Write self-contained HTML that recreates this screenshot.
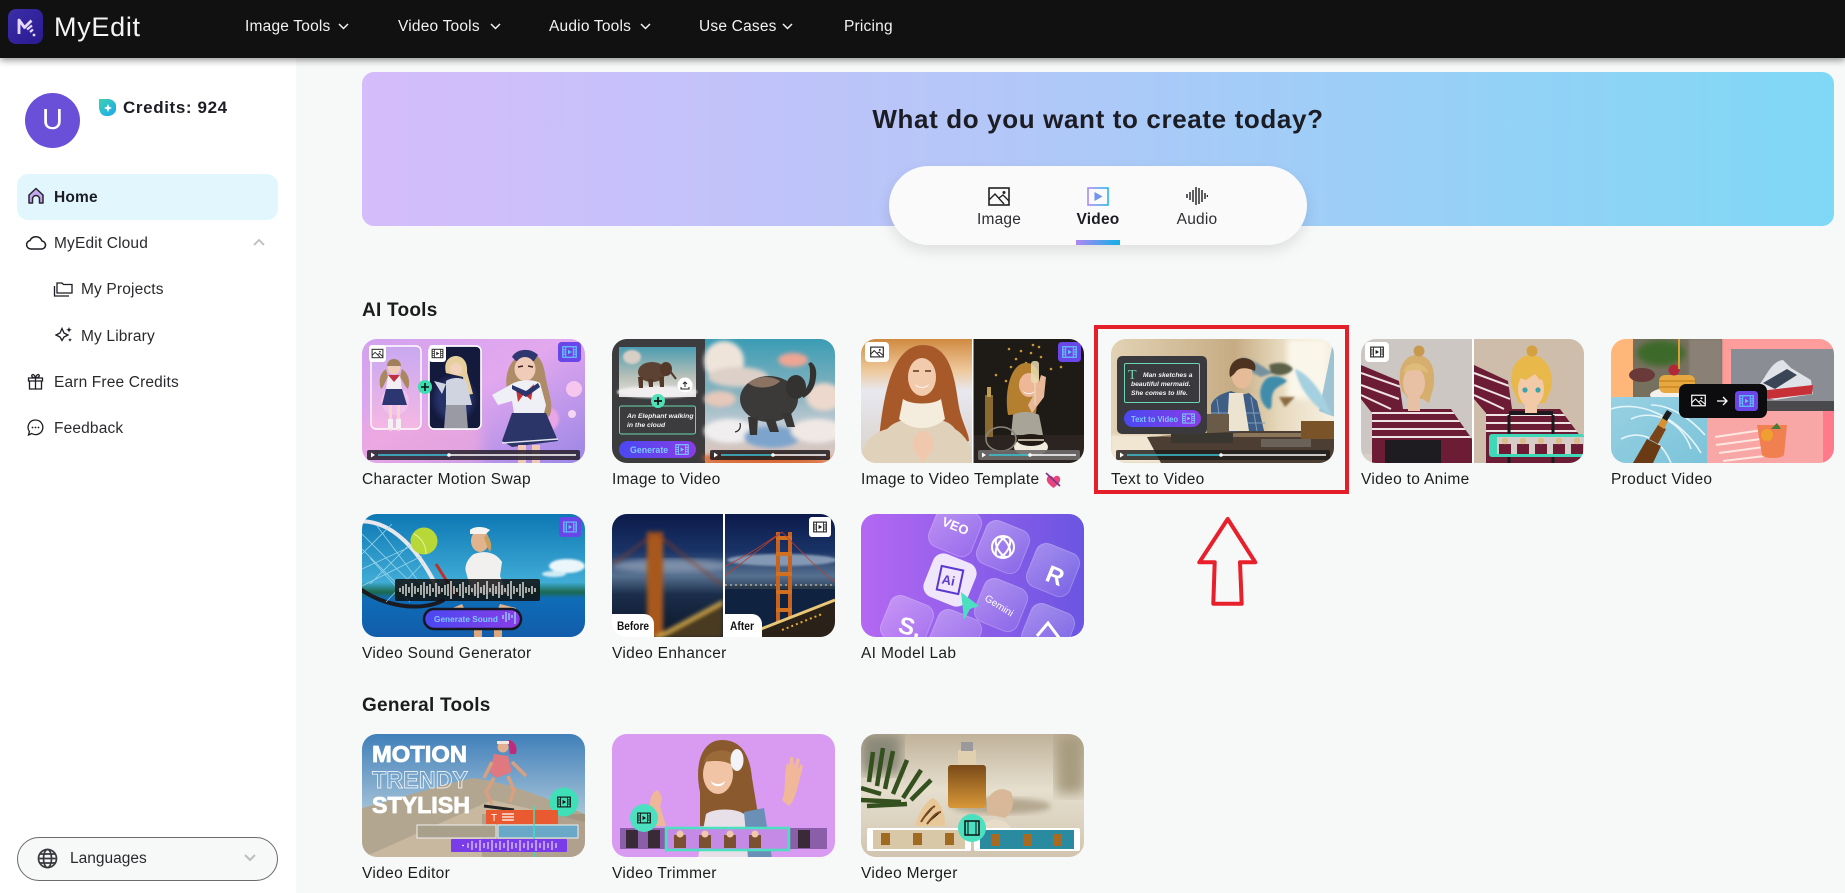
<!DOCTYPE html>
<html lang="en"><head><meta charset="utf-8"><title>MyEdit</title>
<style>
*{box-sizing:border-box;margin:0;padding:0}
html,body{width:1845px;height:893px;overflow:hidden;background:#f7f9f9;font-family:"Liberation Sans",sans-serif;color:#1c1c1c}
.a{position:absolute}
.side{left:0;top:58px;width:296px;height:835px;background:#fff}
.hd{left:0;top:0;width:1845px;height:58px;background:#111;box-shadow:0 2px 7px rgba(0,0,0,.45);z-index:5}
.nav{top:18px;color:#f2f2f2;font-size:15.5px;line-height:18px;white-space:nowrap;letter-spacing:.2px}
.it{font-size:15.5px;line-height:20px;letter-spacing:.15px;color:#2a2a2e;white-space:nowrap}
.lb{font-size:15.5px;line-height:20px;letter-spacing:.33px;color:#1c1c1c;white-space:nowrap}
.h2{font-size:19px;font-weight:bold;line-height:22px;color:#1c1c1c;letter-spacing:.25px}
.t{width:223px;height:124px;border-radius:15px;overflow:hidden}
.t svg{display:block;filter:blur(.35px)}
</style></head><body>
<svg width="0" height="0" style="position:absolute"><defs>
<filter id="b1"><feGaussianBlur stdDeviation="1"/></filter>
<filter id="b2"><feGaussianBlur stdDeviation="2"/></filter>
<filter id="b3"><feGaussianBlur stdDeviation="3"/></filter>
<filter id="b6"><feGaussianBlur stdDeviation="6"/></filter>
<symbol id="film" viewBox="0 0 20 16"><rect x="1" y="1" width="18" height="14" fill="none" stroke="currentColor" stroke-width="1.600"/><path d="M5 1v14M15 1v14M1 5h4M1 8h4M1 11h4M15 5h4M15 8h4M15 11h4" stroke="currentColor" stroke-width="1.200" fill="none"/><path d="M8 5l5 3-5 3z" fill="currentColor"/></symbol>
<symbol id="pic" viewBox="0 0 20 16"><rect x="1" y="1" width="18" height="14" fill="none" stroke="currentColor" stroke-width="1.600"/><path d="M1 11l5-5 8 8M10 10l3-2 6 5" fill="none" stroke="currentColor" stroke-width="1.400"/><circle cx="14" cy="5" r="1.400" fill="currentColor"/></symbol>
<linearGradient id="btn" x1="0" x2="1"><stop offset="0" stop-color="#4a48f2"/><stop offset="1" stop-color="#8a3ce6"/></linearGradient>
</defs></svg>

<div class="a side"></div>
<div class="a hd">
  <svg class="a" style="left:8px;top:9px" width="35" height="35" viewBox="0 0 35 35"><defs><linearGradient id="lg" x1="0" y1="0" x2="1" y2="1"><stop offset="0" stop-color="#3b2ea8"/><stop offset="1" stop-color="#2a1a90"/></linearGradient></defs><rect width="35" height="35" rx="8" fill="url(#lg)"/><path d="M11 25V11l5.500 7.500 7-7" fill="none" stroke="#e6d8ff" stroke-width="2.800" stroke-linejoin="round"/><path d="M19 20.500l5-4M22 23l3-2.500" stroke="#e6d8ff" stroke-width="2.200"/><circle cx="26" cy="26" r="1.400" fill="#e6d8ff"/></svg>
  <div class="a" style="left:54px;top:11px;font-size:27px;line-height:32px;color:#f4f4f4;letter-spacing:.7px;white-space:nowrap">MyEdit</div>
  <div class="a nav" style="left:245px">Image Tools</div>
  <div class="a nav" style="left:398px">Video Tools</div>
  <div class="a nav" style="left:549px">Audio Tools</div>
  <div class="a nav" style="left:699px">Use Cases</div>
  <div class="a nav" style="left:844px">Pricing</div>
  <svg class="a" style="left:337px;top:22px" width="13" height="9" viewBox="0 0 13 9"><path d="M2 2l4.500 4.500L11 2" fill="none" stroke="#f2f2f2" stroke-width="1.500"/></svg>
  <svg class="a" style="left:489px;top:22px" width="13" height="9" viewBox="0 0 13 9"><path d="M2 2l4.500 4.500L11 2" fill="none" stroke="#f2f2f2" stroke-width="1.500"/></svg>
  <svg class="a" style="left:639px;top:22px" width="13" height="9" viewBox="0 0 13 9"><path d="M2 2l4.500 4.500L11 2" fill="none" stroke="#f2f2f2" stroke-width="1.500"/></svg>
  <svg class="a" style="left:781px;top:22px" width="13" height="9" viewBox="0 0 13 9"><path d="M2 2l4.500 4.500L11 2" fill="none" stroke="#f2f2f2" stroke-width="1.500"/></svg>
</div>

<!-- sidebar -->
<div class="a" style="left:25px;top:93px;width:55px;height:55px;border-radius:50%;background:#6a4fd8;color:#fff;font-size:29px;line-height:55px;text-align:center">U</div>
<svg class="a" style="left:98px;top:99px" width="18" height="18" viewBox="0 0 18 18"><defs><linearGradient id="sh" x1="0" y1="0" x2="1" y2="1"><stop offset="0" stop-color="#3fd0b0"/><stop offset="1" stop-color="#1aa8f0"/></linearGradient></defs><path d="M1 0h9a7.500 7.500 0 0 1 0 17H8C3 17 1 12 1 8z" fill="url(#sh)"/><path d="M10 5l1.200 2.800L14 9l-2.800 1.200L10 13l-1.200-2.800L6 9l2.800-1.200z" fill="#fff"/></svg>
<div class="a" style="left:123px;top:97px;font-size:17px;font-weight:bold;line-height:22px;letter-spacing:.62px;color:#1c1c24;white-space:nowrap">Credits: 924</div>

<div class="a" style="left:17px;top:174px;width:261px;height:46px;border-radius:11px;background:#e2f6fd"></div>
<svg class="a" style="left:27px;top:187px" width="18" height="18" viewBox="0 0 18 18"><path d="M2 16V8l7-6.500L16 8v8h-3.500v-4a3.500 3.500 0 0 0-7 0v4z" fill="#c3a8f2" stroke="#26262c" stroke-width="1.500" stroke-linejoin="round"/></svg>
<div class="a it" style="left:54px;top:188px;font-weight:bold;color:#1c1c24;letter-spacing:.2px">Home</div>
<svg class="a" style="left:25px;top:233px" width="22" height="18" viewBox="0 0 22 18"><path d="M6 16h10a4 4 0 0 0 1-8A6.500 6.500 0 0 0 5 7.500 4.300 4.300 0 0 0 6 16z" fill="none" stroke="#1c1c24" stroke-width="1.500"/></svg>
<div class="a it" style="left:54px;top:234px">MyEdit Cloud</div>
<svg class="a" style="left:252px;top:238px" width="14" height="9" viewBox="0 0 14 9"><path d="M2 7l5-5 5 5" fill="none" stroke="#bdbdbd" stroke-width="1.800"/></svg>
<svg class="a" style="left:53px;top:280px" width="20" height="17" viewBox="0 0 20 17"><path d="M4 3h5l1.500 1.500H19V13H4z" fill="none" stroke="#1c1c24" stroke-width="1.300"/><path d="M1.500 6v10H16" fill="none" stroke="#1c1c24" stroke-width="1.300"/></svg>
<div class="a it" style="left:81px;top:280px">My Projects</div>
<svg class="a" style="left:55px;top:326px" width="18" height="18" viewBox="0 0 18 18"><path d="M7 5l2 4.500L13 11.500 9 13.500 7 17 5 13.500 1 11.500 5 9.500z" fill="none" stroke="#1c1c24" stroke-width="1.300" transform="translate(0,-2.500)"/><path d="M14 1l.8 2 2 .8-2 .8-.8 2-.8-2-2-.8 2-.8zM15 12l.6 1.300 1.300.6-1.300.6-.6 1.300-.6-1.300-1.300-.6 1.300-.6z" fill="#1c1c24"/></svg>
<div class="a it" style="left:81px;top:327px">My Library</div>
<svg class="a" style="left:27px;top:373px" width="17" height="17" viewBox="0 0 17 17"><path d="M1.500 5h14v3h-14zM2.500 8v8h12V8M8.500 5v11M8.500 5C6 5 4 3.500 5 2s3 .5 3.500 3C9 2.500 11 .5 12 2s-1 3-3.500 3z" fill="none" stroke="#1c1c24" stroke-width="1.300"/></svg>
<div class="a it" style="left:54px;top:373px">Earn Free Credits</div>
<svg class="a" style="left:27px;top:419px" width="17" height="17" viewBox="0 0 17 17"><path d="M8.500 1a7.300 7.300 0 1 1-3.800 13.500L1.500 16l.9-3.500A7.300 7.300 0 0 1 8.500 1z" fill="none" stroke="#1c1c24" stroke-width="1.300"/><circle cx="5.500" cy="8.500" r=".9" fill="#1c1c24"/><circle cx="8.500" cy="8.500" r=".9" fill="#1c1c24"/><circle cx="11.500" cy="8.500" r=".9" fill="#1c1c24"/></svg>
<div class="a it" style="left:54px;top:419px">Feedback</div>

<div class="a" style="left:17px;top:837px;width:261px;height:44px;border-radius:22px;border:1px solid #6a6a6a;background:#f7f9f9"></div>
<svg class="a" style="left:37px;top:848px" width="21" height="21" viewBox="0 0 21 21"><g fill="none" stroke="#3a3a3e" stroke-width="1.700"><circle cx="10.500" cy="10.500" r="9"/><ellipse cx="10.500" cy="10.500" rx="4" ry="9"/><path d="M1.500 10.500h18M2.800 6h15.400M2.800 15h15.400"/></g></svg>
<div class="a it" style="left:70px;top:849px;letter-spacing:0">Languages</div>
<svg class="a" style="left:243px;top:853px" width="14" height="10" viewBox="0 0 14 10"><path d="M2 2l5 5 5-5" fill="none" stroke="#bdbdbd" stroke-width="2"/></svg>

<!-- banner -->
<div class="a" style="left:362px;top:72px;width:1472px;height:154px;border-radius:12px;background:linear-gradient(90deg,#d5bcfb 0%,#b6c6f8 40%,#7fd8f6 100%)"></div>
<div class="a" style="left:362px;top:104px;width:1472px;text-align:center;font-size:26px;line-height:30px;font-weight:bold;color:#1c1c24;letter-spacing:.63px">What do you want to create today?</div>
<div class="a" style="left:889px;top:166px;width:418px;height:79px;border-radius:40px;background:#fafafa;box-shadow:0 6px 14px rgba(0,0,0,.1)"></div>
<svg class="a" style="left:988px;top:187px" width="22" height="19" viewBox="0 0 22 19"><rect x="1" y="1" width="20" height="17" fill="none" stroke="#222" stroke-width="1.600"/><path d="M1 13l6-6 9 10M11 11l4-3 6 6" fill="none" stroke="#222" stroke-width="1.400"/><circle cx="16" cy="5.500" r="1.500" fill="#222"/></svg>
<svg class="a" style="left:1087px;top:187px" width="22" height="19" viewBox="0 0 22 19"><defs><linearGradient id="vg" x1="0" x2="1"><stop offset="0" stop-color="#a98af0"/><stop offset="1" stop-color="#26b4e8"/></linearGradient></defs><rect x="1" y="1" width="20" height="17" fill="none" stroke="url(#vg)" stroke-width="1.600"/><path d="M7.500 5l8 4.500-8 4.500z" fill="#6f93ee"/></svg>
<svg class="a" style="left:1186px;top:186px" width="22" height="20" viewBox="0 0 22 20"><path d="M1 8v4M4 6v8M7 4v12M10 1v18M13 2v16M16 4v12M19 7v6M21.500 9v2" stroke="#2a2a2e" stroke-width="1.500" fill="none"/></svg>
<div class="a" style="left:949px;top:210px;width:100px;text-align:center;font-size:15.5px;line-height:20px;letter-spacing:.2px;color:#2e2e32">Image</div>
<div class="a" style="left:1048px;top:210px;width:100px;text-align:center;font-size:15.5px;line-height:20px;font-weight:bold;letter-spacing:.2px;color:#1c1c24">Video</div>
<div class="a" style="left:1147px;top:210px;width:100px;text-align:center;font-size:15.5px;line-height:20px;letter-spacing:.2px;color:#2e2e32">Audio</div>
<div class="a" style="left:1076px;top:240px;width:44px;height:5px;background:linear-gradient(90deg,#b087f0,#10b0e8)"></div>

<div class="a h2" style="left:362px;top:300px">AI Tools</div>
<div class="a h2" style="left:362px;top:695px">General Tools</div>

<!-- 1 Character Motion Swap -->
<div class="a t" style="left:362px;top:339px"><svg width="223" height="124" viewBox="0 0 223 124">
<defs><linearGradient id="c1" x1="0" y1="0" x2="1" y2="1"><stop offset="0" stop-color="#d2a2ee"/><stop offset=".45" stop-color="#e3a8ee"/><stop offset="1" stop-color="#9a86e6"/></linearGradient><linearGradient id="c1b" x1="0" y1="0" x2="0" y2="1"><stop offset="0" stop-color="#c8a8f0"/><stop offset="1" stop-color="#f5b8e4"/></linearGradient></defs>
<rect width="223" height="124" fill="url(#c1)"/>
<rect x="0" y="80" width="120" height="44" fill="#efa8dc" opacity=".7" filter="url(#b6)"/>
<circle cx="212" cy="50" r="8" fill="#f6c6ee"/><circle cx="210" cy="75" r="4" fill="#f6d6f2"/><circle cx="185" cy="80" r="12" fill="#e8a6e6" filter="url(#b1)"/>
<rect x="9" y="7" width="50" height="83" rx="5" fill="url(#c1b)" stroke="#fff" stroke-width="1.400"/>
<circle cx="33" cy="62" r="14" fill="#f5c6ee" opacity=".7"/>
<path d="M24 30c-6 4-8 12-5 20 3-2 4-8 7-12zM40 30c6 4 9 12 6 20-3-2-5-8-8-12z" fill="#a98860"/>
<circle cx="32" cy="29" r="6.500" fill="#f0cdb8"/><path d="M25 27a7 7 0 0 1 14 0z" fill="#a08058"/>
<path d="M26 36h12l2 14H24z" fill="#f2eef4"/><path d="M26 36l6 7 6-7z" fill="#c03040"/>
<path d="M24 50h16l5 16H20z" fill="#2c3670"/><path d="M27 66h3v26h-3zM35 66h3v26h-3z" fill="#f4d8ce"/><path d="M26 80h5v10h-5zM34 80h5v10h-5z" fill="#f4f0f4"/>
<rect x="67" y="7" width="52" height="83" rx="5" fill="#141a3c" stroke="#fff" stroke-width="1.400"/>
<ellipse cx="92" cy="60" rx="20" ry="22" fill="#26306a" filter="url(#b3)"/>
<path d="M84 34c-3-12 4-17 10-17s12 5 11 16l6 22-8 1-2-18z" fill="#e6cf9c"/><circle cx="94" cy="30" r="6" fill="#f2d2bc"/>
<path d="M84 42c6-4 16-4 20 0l6 24-26 0z" fill="#d0d3e0"/><path d="M84 66h20l2 24H82z" fill="#9a9aa4"/><path d="M72 42l12 3-4 10z" fill="#d0d3e0"/>
<rect x="67" y="7" width="52" height="83" rx="5" fill="none" stroke="#fff" stroke-width="1.400"/>
<rect x="7" y="6" width="17" height="17" rx="3" fill="#fff"/><use href="#pic" x="9.500" y="9" width="12" height="11" color="#222"/>
<rect x="67" y="6" width="17" height="17" rx="3" fill="#fff"/><use href="#film" x="69.500" y="9" width="12" height="11" color="#222"/>
<circle cx="63" cy="48" r="7" fill="#3fdcb0"/><path d="M59 48h8M63 44v8" stroke="#111" stroke-width="1.600"/>
<path d="M146 54c-6-18 4-40 20-40 14 0 16 14 18 26 2 12 8 26 4 36-4 6-10 0-12-10-2-10-4-14-8-16z" fill="#ae8c68"/>
<path d="M150 18c4-8 18-10 26-2l-4 6h-18z" fill="#2f3670"/>
<ellipse cx="163" cy="30" rx="10.500" ry="12" fill="#f0cbb8"/><path d="M156 28l5-1M166 27l5 1" stroke="#40201a" stroke-width="1.600"/>
<path d="M148 46c8-6 24-6 30-2l6 22-2 8h-30l-2-12-14 4-6-10z" fill="#eef0f6"/>
<path d="M154 50l9 4 9-9-3 16-7-6-6 8z" fill="#c83038"/><path d="M150 46l14 6 12-8 2 4-14 10-14-8z" fill="#2a356e"/>
<path d="M150 74h34l12 28-46 6-10-6z" fill="#2b3568"/><path d="M140 104l56-4" stroke="#e4e4ee" stroke-width="1.400"/>
<rect x="156" y="106" width="8" height="18" fill="#efc9b6"/><rect x="170" y="106" width="8" height="18" fill="#efc9b6"/>
<rect x="196" y="3" width="23" height="20" rx="3.500" fill="#6a45e8"/><use href="#film" x="200" y="7" width="15" height="12" color="#60c8f8"/>
<rect x="5" y="111" width="213" height="10" rx="2" fill="#2a2230" opacity=".88"/><path d="M9 113.500l4 2.500-4 2.500z" fill="#fff"/><path d="M16 116h71" stroke="#3cc4d8" stroke-width="1.500"/><path d="M87 116h127" stroke="#fff" stroke-width="1.500"/><circle cx="87" cy="116" r="1.800" fill="#fff"/>
</svg></div>
<div class="a lb" style="left:362px;top:470px">Character Motion Swap</div>

<!-- 2 Image to Video -->
<div class="a t" style="left:612px;top:339px"><svg width="223" height="124" viewBox="0 0 223 124">
<defs><linearGradient id="c2" x1="0" y1="0" x2="0" y2="1"><stop offset="0" stop-color="#3a9cb4"/><stop offset=".45" stop-color="#8ab4c0"/><stop offset=".7" stop-color="#c4ccd4"/><stop offset=".92" stop-color="#d8c4bc"/><stop offset="1" stop-color="#e07a48"/></linearGradient><linearGradient id="c2s" x1="0" y1="0" x2="0" y2="1"><stop offset="0" stop-color="#4a9cb0"/><stop offset=".6" stop-color="#b8c0b8"/><stop offset="1" stop-color="#e8e4e0"/></linearGradient></defs>
<rect width="223" height="124" fill="#3c3c3e"/>
<rect x="93" width="130" height="124" fill="url(#c2)"/>
<g filter="url(#b2)"><ellipse cx="112" cy="22" rx="20" ry="20" fill="#efe4da"/><ellipse cx="126" cy="38" rx="30" ry="10" fill="#dcd0c8"/><ellipse cx="181" cy="21" rx="15" ry="7" fill="#eea594"/><ellipse cx="212" cy="58" rx="18" ry="14" fill="#ecd8cc"/><ellipse cx="108" cy="60" rx="16" ry="8" fill="#e6c8ba"/><ellipse cx="118" cy="92" rx="26" ry="12" fill="#f0eeee"/><ellipse cx="160" cy="98" rx="28" ry="11" fill="#7da4cc"/><ellipse cx="205" cy="92" rx="26" ry="12" fill="#f0e8e4"/><ellipse cx="150" cy="119" rx="60" ry="5" fill="#d8632e"/></g>
<path d="M128 84c2 8-5 9-5 9" stroke="#2a2828" stroke-width="1.200" fill="none"/>
<ellipse cx="157" cy="60" rx="29" ry="23" fill="#3c3a38"/><ellipse cx="184" cy="48" rx="10" ry="12" fill="#343230"/>
<path d="M189 53c6-2 9-9 9-18 0-5 0-8-2-10l3-2c4 3 6 8 5 15-1 10-5 17-13 21z" fill="#343230"/>
<path d="M136 78h10l-1 18h-7zM153 80h10l4 13h-9zM170 74h9l4 14h-8z" fill="#383634"/>
<path d="M136 44c8-7 22-8 32-2-4 6-22 10-32 2z" fill="#c09a80" opacity=".6"/>
<rect x="7" y="8" width="77" height="50" fill="url(#c2s)"/>
<ellipse cx="20" cy="18" rx="9" ry="7" fill="#d8cfc6" filter="url(#b1)"/>
<ellipse cx="45" cy="53" rx="40" ry="6" fill="#f0eeee" filter="url(#b1)"/>
<ellipse cx="40" cy="33" rx="14" ry="10" fill="#5c4232"/><ellipse cx="54" cy="30" rx="6" ry="7" fill="#54392a"/><path d="M26 38h5v11h-4zM36 40h5v8h-4zM47 38h5v10h-4z" fill="#54392a"/><path d="M58 32l6 8" stroke="#54392a" stroke-width="2"/>
<circle cx="73" cy="46" r="7.500" fill="#fff"/><path d="M69 48v2h8v-2M73 48v-5M71 45l2-2 2 2" stroke="#222" stroke-width="1" fill="none"/>
<rect x="7.500" y="67" width="76" height="28" rx="2" fill="#3c3c3e" stroke="#6ad8ae" stroke-width="1"/>
<text x="15" y="79" font-size="6.800" font-style="italic" font-weight="bold" fill="#f2f2f2">An Elephant walking</text><text x="15" y="88" font-size="6.800" font-style="italic" font-weight="bold" fill="#f2f2f2">in the cloud</text>
<circle cx="46" cy="62" r="7" fill="#4fe0b8"/><path d="M42 62h8M46 58v8" stroke="#111" stroke-width="1.700"/>
<rect x="7" y="102" width="77" height="17" rx="8.500" fill="url(#btn)"/><text x="18" y="114" font-size="8.800" font-weight="bold" fill="#7cc8ff">Generate</text><use href="#film" x="63" y="105" width="14" height="11" color="#7cc8ff"/>
<rect x="98" y="111" width="120" height="10" rx="2" fill="#201c20" opacity=".85"/><path d="M102 113.500l4 2.500-4 2.500z" fill="#fff"/><path d="M109 116h52" stroke="#3cc4d8" stroke-width="1.500"/><path d="M161 116h53" stroke="#fff" stroke-width="1.500"/><circle cx="161" cy="116" r="1.800" fill="#fff"/>
</svg></div>
<div class="a lb" style="left:612px;top:470px">Image to Video</div>

<!-- 3 Image to Video Template -->
<div class="a t" style="left:861px;top:339px"><svg width="224" height="124" viewBox="0 0 224 124">
<defs><linearGradient id="c3" x1="0" y1="0" x2="0" y2="1"><stop offset="0" stop-color="#d08a40"/><stop offset=".25" stop-color="#eec89a"/><stop offset=".42" stop-color="#e8e8f0"/><stop offset="1" stop-color="#d8d0c8"/></linearGradient></defs>
<rect width="112" height="124" fill="url(#c3)"/>
<path d="M18 100C22 60 30 6 62 6c30 0 32 40 36 62 3 16 10 26 10 34-30 10-70 10-90-2z" fill="#a8592a"/>
<path d="M0 124c0-18 10-30 26-34 6-6 12-8 20-10h30c8 2 14 4 18 10 10 6 18 18 18 34z" fill="#e0d2ba"/>
<ellipse cx="61" cy="38" rx="14" ry="19" fill="#f2caac"/><path d="M54 45c4 4 10 4 14 0-1 5-13 5-14 0z" fill="#fff"/><path d="M52 32h6M64 32h6" stroke="#5a3420" stroke-width="1.600"/>
<path d="M42 60c8 6 30 6 38 0l4 20c-12 12-34 12-46 0z" fill="#f4ecdc"/>
<path d="M52 110c-2-10 4-18 10-18 8 0 12 8 10 18l-10 14z" fill="#f0c8ae"/>
<rect x="112" width="112" height="124" fill="#1e1a16"/>
<g fill="#c89838"><circle cx="160" cy="12" r="1.300"/><circle cx="172" cy="6" r="1.300"/><circle cx="180" cy="18" r="1.300"/><circle cx="150" cy="28" r="1.300"/><circle cx="145" cy="42" r="1.300"/><circle cx="190" cy="30" r="1.300"/><circle cx="165" cy="24" r="1.300"/><circle cx="178" cy="8" r="1.300"/><circle cx="200" cy="28" r="1.300"/><circle cx="155" cy="20" r="1.300"/><circle cx="170" cy="14" r="1.300"/><circle cx="148" cy="10" r="1.300"/><circle cx="135" cy="36" r="1.300"/></g>
<path d="M147 76c-4-22 2-52 18-52 10 0 14 8 13 22l-3 28z" fill="#b4802f"/>
<ellipse cx="168" cy="46" rx="10" ry="12" fill="#eeb898"/><path d="M162 52c4 3 8 3 12 0-2 4-10 4-12 0z" fill="#fff"/>
<path d="M176 50l4-14 5 2-2 20-12 16-4-8z" fill="#e8b898"/><rect x="170" y="22" width="8" height="22" rx="3" fill="#e8dcb0" opacity=".85"/><path d="M174 44v22" stroke="#e8e0c0" stroke-width="1"/>
<path d="M152 76c6-4 20-4 26 0l4 20h-32z" fill="#a8a498"/>
<rect x="112" y="96" width="112" height="28" fill="#2c2420"/>
<rect x="124" y="56" width="8" height="42" fill="#8a6a30"/><rect x="126" y="48" width="4" height="10" fill="#c0a050"/>
<ellipse cx="170" cy="108" rx="17" ry="9" fill="#f0ebdc"/><ellipse cx="170" cy="101" rx="14" ry="6" fill="#221a14"/><path d="M157 101h26" stroke="#e8e0c8" stroke-width="1.500"/>
<ellipse cx="140" cy="100" rx="15" ry="12" fill="none" stroke="#8a867a" stroke-width="1.500"/>
<rect x="111" width="1.500" height="124" fill="#fff"/>
<rect x="4" y="3" width="24" height="20" rx="4" fill="#fff"/><use href="#pic" x="9" y="7" width="14" height="12" color="#222"/>
<rect x="197" y="3" width="23" height="20" rx="3.500" fill="#6a45e8"/><use href="#film" x="201" y="7" width="15" height="12" color="#60c8f8"/>
<rect x="117" y="111" width="102" height="10" rx="2" fill="#6e6c6a" opacity=".9"/><path d="M121 113.500l4 2.500-4 2.500z" fill="#fff"/><path d="M128 116h41" stroke="#3cc4d8" stroke-width="1.500"/><path d="M169 116h46" stroke="#fff" stroke-width="1.500"/><circle cx="169" cy="116" r="1.800" fill="#fff"/>
</svg></div>
<div class="a lb" style="left:861px;top:470px">Image to Video Template</div>
<svg class="a" style="left:1045px;top:472px" width="17" height="17" viewBox="0 0 17 17"><path d="M8.500 16C3 12 1 9 2 6c1-3 5-3 6.500 0C10 3 14 3 15 6c1 3-1 6-6.500 10z" fill="#e8457c"/><path d="M1 1l14 13" stroke="#7a3a8c" stroke-width="1.800"/></svg>

<!-- 4 Text to Video -->
<div class="a t" style="left:1111px;top:339px"><svg width="224" height="124" viewBox="0 0 224 124">
<defs><linearGradient id="c4" x1="0" x2="1"><stop offset="0" stop-color="#e2d2b4"/><stop offset=".55" stop-color="#c6ac84"/><stop offset=".75" stop-color="#e6d8bc"/><stop offset="1" stop-color="#f8f2e4"/></linearGradient></defs>
<rect width="224" height="124" fill="url(#c4)"/>
<rect x="176" y="0" width="40" height="60" fill="#faf6ea" filter="url(#b3)"/>
<path d="M208 72L221 8l3 0v70z" fill="#9ec4d4"/>
<rect x="0" y="96" width="50" height="28" fill="#f0e6d2" filter="url(#b1)"/>
<g filter="url(#b1)"><path d="M130 18c12 2 22 10 32 16l-12 4-12-6z" fill="#74909e"/><path d="M155 40c-8 8-8 22 2 30 6 2 2-10 5-16 2-6 10-8 14-12-6-6-17-6-21-2z" fill="#3f8cab"/><path d="M158 26c10-4 20-2 24 4-4 6-14 8-22 4z" fill="#5c6248"/><path d="M168 58l16 0-10 10z" fill="#8a6a40"/><path d="M184 30c12 4 28 22 36 46-16-6-32-26-36-46z" fill="#a4d0e0"/></g>
<path d="M100 66c4-10 14-12 20-14l10 4 8-2 8 8 8 34H100z" fill="#3e5e86"/><path d="M106 60l4 32M140 58l6 34M100 74l50 0M100 84l54 0" stroke="#7e9cbc" stroke-width="1"/>
<path d="M118 54l14 0 6 38h-22z" fill="#ece4d0"/>
<ellipse cx="131" cy="36" rx="10.500" ry="13.500" fill="#e6bc98"/><path d="M119 38c-3-14 8-22 19-18 7 3 7 8 6 12-8-4-17-4-20 2-2 2-4 4-5 4z" fill="#4e3420"/>
<rect x="96" y="75" width="22" height="21" fill="#6a5a48"/>
<path d="M36 98l96-6 92 0v32H50z" fill="#4c3e32"/><path d="M36 98l92-4h96v4H36z" fill="#8a745a"/>
<rect x="60" y="94" width="62" height="10" fill="#3a3630"/>
<rect x="190" y="82" width="34" height="18" fill="#7a5428"/><rect x="150" y="100" width="50" height="8" fill="#6a6258"/>
<rect x="6" y="17" width="90" height="78" rx="5" fill="#3a3a3e"/>
<rect x="13.500" y="24.500" width="75" height="39" rx="1.500" fill="#3a3a3e" stroke="#6ad8ae" stroke-width="1"/>
<text x="17" y="40" font-size="14" font-family="Liberation Serif" fill="#6ad8ae">T</text>
<text x="32" y="38" font-size="6.700" font-style="italic" font-weight="bold" fill="#f2f2f2">Man sketches a</text><text x="20" y="47" font-size="6.700" font-style="italic" font-weight="bold" fill="#f2f2f2">beautiful mermaid.</text><text x="20" y="56" font-size="6.700" font-style="italic" font-weight="bold" fill="#f2f2f2">She comes to life.</text>
<rect x="13" y="71" width="77" height="17" rx="8.500" fill="url(#btn)"/><text x="20" y="83" font-size="8.200" font-weight="bold" fill="#7cc8ff" textLength="47" lengthAdjust="spacingAndGlyphs">Text to Video</text><use href="#film" x="71" y="74" width="13" height="11" color="#7cc8ff"/>
<rect x="5" y="111" width="214" height="10" rx="2" fill="#201c18" opacity=".82"/><path d="M9 113.500l4 2.500-4 2.500z" fill="#fff"/><path d="M16 116h94" stroke="#3cc4d8" stroke-width="1.500"/><path d="M110 116h105" stroke="#fff" stroke-width="1.500"/><circle cx="110" cy="116" r="1.800" fill="#fff"/>
</svg></div>
<div class="a lb" style="left:1111px;top:470px">Text to Video</div>

<!-- 5 Video to Anime -->
<div class="a t" style="left:1361px;top:339px"><svg width="223" height="124" viewBox="0 0 223 124">
<defs><clipPath id="sl"><path d="M0 26l38 16 4 28h48l21 30v24H11v-50L0 60z"/></clipPath><clipPath id="sr"><path d="M113 26l34 16 4 28h48l24 32v22H125v-50l-12-14z"/></clipPath></defs>
<rect width="111" height="124" fill="#ccc7c2"/>
<rect x="113" width="110" height="124" fill="#cdbdaa"/>
<rect x="0" y="115" width="111" height="9" fill="#d8d0c8"/>
<g clip-path="url(#sl)"><rect width="111" height="124" fill="#6c1c34"/><path d="M0 34l40 14M0 46l38 14M0 56l30 14M10 74h100M10 82h100M10 90h100M10 98h100" stroke="#eee2e4" stroke-width="2" fill="none"/></g>
<rect x="24" y="101" width="56" height="23" fill="#1e1c20"/>
<path d="M41 52c-6-18 0-36 15-36 14 0 20 16 16 34l-4 14-6-4H48z" fill="#d6ae6e"/>
<ellipse cx="53" cy="44" rx="11" ry="16" fill="#e8c0a4"/><path d="M42 34c3-13 22-13 25 0-8-4-17-4-25 0z" fill="#dfbc78"/><path d="M47 58h12v14H47z" fill="#e8c0a4"/>
<circle cx="58" cy="12" r="5.500" fill="#c89a50"/>
<g clip-path="url(#sr)"><rect x="113" width="110" height="124" fill="#6c1c34"/><path d="M113 34l38 14M113 46l36 14M113 56l30 14M125 76h98M125 84h98M125 92h98" stroke="#eee2e4" stroke-width="2" fill="none"/></g>
<rect x="148" y="72" width="44" height="4" fill="#1c1a1c"/><path d="M148 76v48M192 76v48" stroke="#1c1a1c" stroke-width="3"/>
<path d="M152 50c-6-18 4-34 18-34 14 0 24 16 20 34l-6 14h-26z" fill="#e8b84a"/>
<ellipse cx="170" cy="50" rx="13" ry="18" fill="#f2caa8"/><path d="M156 38c6-14 28-14 30 0l-7 3-5-6-9 6z" fill="#e8b84a"/><circle cx="164" cy="51" r="2.600" fill="#3aa4a8"/><circle cx="177" cy="51" r="2.600" fill="#3aa4a8"/><path d="M164 66h12v8h-12z" fill="#f2caa8"/>
<circle cx="171" cy="12" r="5.500" fill="#d4a040"/>
<rect x="111" width="2" height="124" fill="#fff"/>
<rect x="128" y="95" width="95" height="23" rx="3" fill="#3fd8b8"/><rect x="136" y="98" width="87" height="17" fill="#d8ccc8"/>
<g fill="#6c1c34"><rect x="138" y="105" width="12" height="10"/><rect x="156" y="105" width="12" height="10"/><rect x="174" y="105" width="12" height="10"/><rect x="192" y="105" width="12" height="10"/><rect x="210" y="105" width="12" height="10"/></g>
<g fill="#dcbc88"><circle cx="144" cy="102" r="3.200"/><circle cx="162" cy="102" r="3.200"/><circle cx="180" cy="102" r="3.200"/><circle cx="198" cy="102" r="3.200"/><circle cx="216" cy="102" r="3.200"/></g>
<rect x="4" y="3" width="24" height="20" rx="4" fill="#fff"/><use href="#film" x="9" y="7" width="14" height="12" color="#222"/>
</svg></div>
<div class="a lb" style="left:1361px;top:470px">Video to Anime</div>

<!-- 6 Product Video -->
<div class="a t" style="left:1611px;top:339px"><svg width="223" height="124" viewBox="0 0 223 124">
<defs><linearGradient id="c6" x1="0" y1="0" x2="1" y2="1"><stop offset="0" stop-color="#98d0e2"/><stop offset="1" stop-color="#7cc4da"/></linearGradient></defs>
<rect width="223" height="124" fill="#ff9c9c"/><rect width="22" height="58" fill="#ffb678"/>
<rect x="22" width="89" height="58" fill="#76705e"/><ellipse cx="50" cy="14" rx="24" ry="13" fill="#3e6a2c" filter="url(#b3)"/><rect x="78" y="0" width="33" height="58" fill="#8a8074" filter="url(#b1)"/>
<ellipse cx="31" cy="36" rx="13" ry="7" fill="#6a3a3a"/><ellipse cx="65" cy="56" rx="26" ry="8" fill="#f4f0ec"/>
<rect x="48" y="36" width="36" height="18" rx="6" fill="#e8a840"/><path d="M48 42h36M48 48h36" stroke="#c48020" stroke-width="1.200"/><circle cx="63" cy="31" r="5.500" fill="#b02838"/><path d="M68 0v30" stroke="#d8a030" stroke-width="2"/>
<rect x="120" y="10" width="103" height="65" fill="#8a8e94"/>
<path d="M148 46c6-6 12-24 24-25l8 8 20 12 2 14-38 6-16-4z" fill="#dfe3e8"/><path d="M152 44l24-14 10 6-22 14z" fill="#3a4656"/><path d="M148 52l54-6-1 9-44 5z" fill="#c83038"/>
<rect x="150" y="62" width="73" height="13" fill="#4a4a4c"/>
<rect x="0" y="58" width="96" height="66" fill="url(#c6)"/><path d="M20 80c20-10 50 0 60 30M10 100c20-10 40 0 50 24M0 70c30-10 70 10 90 44M40 66c20 0 40 14 54 30" stroke="#e4f4f8" stroke-width="1.600" fill="none"/>
<path d="M22 124l14-24 14 7-8 17z" fill="#6a3a14"/><path d="M38 100l9-14 8 4-8 15z" fill="#7a4418"/><path d="M47 86l4-7 6 3-4 8z" fill="#d89030"/><path d="M51 79l5-8 5 3-5 8z" fill="#1c1c1c"/>
<rect x="96" y="72" width="116" height="52" fill="#f8a6a6"/><rect x="212" y="72" width="11" height="52" fill="#ff7a8a"/>
<path d="M105 106l60-8M108 114l60-8M112 122l50-6M104 98l54-8" stroke="#fbe8e0" stroke-width="2"/>
<path d="M146 86h30l-3 30c-2 4-20 4-22 0z" fill="#f08050"/><circle cx="156" cy="96" r="6" fill="#f0a030"/><path d="M160 90l6-6 4 6z" fill="#4a7a3a"/>
<rect x="68" y="45" width="88" height="34" rx="7" fill="#0c0c0e"/>
<use href="#pic" x="80" y="55" width="15" height="13" color="#fff"/><path d="M106 62h10M112 58l4 4-4 4" fill="none" stroke="#fff" stroke-width="1.300"/>
<rect x="124" y="52" width="23" height="20" rx="3.500" fill="#6a45e8"/><use href="#film" x="128" y="56" width="15" height="12" color="#60c8f8"/>
</svg></div>
<div class="a lb" style="left:1611px;top:470px">Product Video</div>

<!-- 7 Video Sound Generator -->
<div class="a t" style="left:362px;top:514px;height:123px"><svg width="223" height="124" viewBox="0 0 223 124">
<defs><linearGradient id="c7" x1="0" y1="0" x2="0" y2="1"><stop offset="0" stop-color="#0e78b4"/><stop offset=".55" stop-color="#40acd6"/><stop offset=".63" stop-color="#1c6a50"/><stop offset=".68" stop-color="#0f6cb6"/><stop offset="1" stop-color="#125caa"/></linearGradient></defs>
<rect width="223" height="124" fill="url(#c7)"/>
<g filter="url(#b1)"><ellipse cx="205" cy="52" rx="18" ry="7" fill="#eaf6fa"/><ellipse cx="192" cy="60" rx="12" ry="3" fill="#d0ecf4"/></g>
<path d="M-8 8C30 2 60 40 78 80" fill="none" stroke="#e8e8ec" stroke-width="4"/><path d="M-8 70C20 94 60 98 82 86" fill="none" stroke="#1a1a20" stroke-width="4"/><path d="M0 20l50 50M0 35l40 40M15 12l45 60M0 55l65-30M0 72l60-30M30 10l-30 30M48 30L8 70M62 48L24 88M8 44l40 44" stroke="#a6dcec" stroke-width=".8" opacity=".85"/>
<path d="M74 50l20 32" stroke="#c03028" stroke-width="3"/>
<circle cx="62" cy="27" r="13.500" fill="#b8d838"/><path d="M52 20c8 4 12 12 12 20" stroke="#e8f0a0" stroke-width="1" fill="none"/>
<path d="M104 58c-2-6 2-14 8-18 10-4 22-2 28 8l-2 14 8 18-36 0z" fill="#f2f0ee"/>
<ellipse cx="118" cy="27" rx="9" ry="11" fill="#e2b48e"/><path d="M108 16c4-4 14-4 20 0l-4 4h-16z" fill="#f4f4f2"/><path d="M124 20c6 6 6 14 4 18-3-4-4-10-6-14z" fill="#c8a060"/>
<path d="M138 90l16 4-2 12-20-2zM100 90l-14 6 2 8 18-2z" fill="#e2b48e"/><path d="M112 112h8v12h-8zM132 112h8v12h-8z" fill="#dca880"/>
<rect x="33" y="65" width="145" height="22" rx="2" fill="#111" opacity=".85"/>
<path d="M38 74v4M41 72v8M44 70v12M47 73v6M50 69v14M53 72v8M56 74v4M59 71v10M62 68v16M65 72v8M68 70v12M71 74v4M74 69v14M77 72v8M80 74v4M83 71v10M86 70v12M89 67v18M92 72v8M95 74v4M98 70v12M101 68v16M104 73v6M107 71v10M110 74v4M113 70v12M116 68v16M119 73v6M122 71v10M125 67v18M128 74v4M131 70v12M134 72v8M137 68v16M140 71v10M143 74v4M146 70v12M149 67v18M152 72v8M155 74v4M158 70v12M161 68v16M164 73v6M167 74v4M170 72v8M173 74v4" stroke="#f4f4f4" stroke-width="1.300"/>
<rect x="62" y="95" width="97" height="20" rx="10" fill="url(#btn)" stroke="#161620" stroke-width="2.500"/><text x="72" y="108" font-size="8.500" font-weight="bold" fill="#7cc8ff" textLength="64" lengthAdjust="spacingAndGlyphs">Generate Sound</text>
<path d="M141 105v-4M144 108v-10M147 106v-7M150 104v-3M153 110v-12" stroke="#9cd8ff" stroke-width="1.300"/>
<rect x="197" y="3" width="22" height="20" rx="3.500" fill="#6a45e8"/><use href="#film" x="201" y="7" width="14" height="12" color="#60c8f8"/>
</svg></div>
<div class="a lb" style="left:362px;top:644px">Video Sound Generator</div>

<!-- 8 Video Enhancer -->
<div class="a t" style="left:612px;top:514px;height:123px"><svg width="223" height="124" viewBox="0 0 223 124">
<defs><linearGradient id="c8" x1="0" y1="0" x2="0" y2="1"><stop offset="0" stop-color="#0c1a4a"/><stop offset=".3" stop-color="#1a3468"/><stop offset=".5" stop-color="#56708f"/><stop offset=".65" stop-color="#1a2d4a"/><stop offset="1" stop-color="#0c1628"/></linearGradient></defs>
<rect width="223" height="124" fill="url(#c8)"/>
<ellipse cx="60" cy="52" rx="60" ry="7" fill="#7c8ea8" filter="url(#b3)"/>
<g filter="url(#b2)"><path d="M35 18h16v106H35z" fill="#a8581c"/><path d="M0 50C15 42 30 28 44 18 60 34 90 55 111 72" fill="none" stroke="#8a3a20" stroke-width="1.600"/><path d="M40 124L111 86V124z" fill="#4a3a20"/><path d="M44 124L111 88" stroke="#e8b850" stroke-width="3"/></g>
<path d="M35 60h16" stroke="#111" stroke-width="5" opacity=".4" filter="url(#b1)"/>
<rect x="113" width="110" height="124" fill="url(#c8)"/><ellipse cx="170" cy="46" rx="55" ry="6" fill="#8398b4" filter="url(#b1)"/>
<path d="M113 72h110v3H113z" fill="#2a3a4a"/><path d="M113 71l110 0" stroke="#e8d8a0" stroke-width="1" stroke-dasharray="2 3"/>
<rect x="113" y="75" width="110" height="49" fill="#0f2240"/>
<path d="M164 18h4v106h-4zM176 18h4v106h-4z" fill="#c8621c"/><path d="M164 24h16M164 40h16M164 60h16M164 78h16M164 96h16" stroke="#d07020" stroke-width="4"/>
<path d="M113 52c18-8 36-20 57-34 14 14 34 36 53 50M113 62l57-44" fill="none" stroke="#b84030" stroke-width=".8"/>
<path d="M126 124L223 84v40z" fill="#2a2218"/><path d="M126 124L223 86" stroke="#e8c878" stroke-width="3"/><path d="M170 116l40-16" stroke="#e8a838" stroke-width="2" stroke-dasharray="2 3"/>
<rect x="111" width="2" height="124" fill="#fff"/>
<path d="M0 100h32a10 10 0 0 1 10 10v14H0z" fill="#fff"/><text x="5" y="116" font-size="11.500" font-weight="bold" fill="#111" textLength="32" lengthAdjust="spacingAndGlyphs">Before</text>
<path d="M113 100h27a10 10 0 0 1 10 10v14h-37z" fill="#fff"/><text x="118" y="116" font-size="11.500" font-weight="bold" fill="#111" textLength="24" lengthAdjust="spacingAndGlyphs">After</text>
<rect x="197" y="3" width="22" height="20" rx="3" fill="#fff"/><use href="#film" x="201" y="7" width="14" height="12" color="#222"/>
</svg></div>
<div class="a lb" style="left:612px;top:644px">Video Enhancer</div>

<!-- 9 AI Model Lab -->
<div class="a t" style="left:861px;top:514px;height:123px"><svg width="224" height="124" viewBox="0 0 224 124">
<defs><linearGradient id="c9" x1="0" x2="1"><stop offset="0" stop-color="#b468f2"/><stop offset="1" stop-color="#6a55e2"/></linearGradient><linearGradient id="g9" x1="0" y1="0" x2="1" y2="1"><stop offset="0" stop-color="#fff" stop-opacity=".32"/><stop offset="1" stop-color="#fff" stop-opacity=".08"/></linearGradient></defs>
<rect width="224" height="124" fill="url(#c9)"/>
<g fill="url(#g9)" stroke="#fff" stroke-opacity=".25">
<rect x="-23" y="-23" width="46" height="46" rx="11" transform="translate(94,16) rotate(22)"/>
<rect x="-23" y="-23" width="46" height="46" rx="11" transform="translate(142,33) rotate(22)"/>
<rect x="-23" y="-23" width="46" height="46" rx="11" transform="translate(192,56) rotate(22)"/>
<rect x="-23" y="-23" width="46" height="46" rx="11" transform="translate(140,91) rotate(22)"/>
<rect x="-23" y="-23" width="46" height="46" rx="11" transform="translate(187,116) rotate(22)"/>
<rect x="-23" y="-23" width="46" height="46" rx="11" transform="translate(46,108) rotate(22)"/>
<rect x="-23" y="-23" width="46" height="46" rx="11" transform="translate(94,122) rotate(22)"/>
</g>
<rect x="-23" y="-23" width="46" height="46" rx="11" transform="translate(89,66) rotate(22)" fill="#efe6fc"/>
<text transform="translate(80,11) rotate(22)" font-size="13" font-weight="bold" fill="#fff">VEO</text>
<g transform="translate(142,33)" fill="none" stroke="#fff" stroke-width="2"><circle r="11"/><ellipse rx="11" ry="5.500" transform="rotate(60)"/><ellipse rx="11" ry="5.500" transform="rotate(-60)"/></g>
<text transform="translate(183,66) rotate(22)" font-size="24" font-weight="bold" fill="#fff">R</text>
<text transform="translate(123,86) rotate(32)" font-size="10" fill="#fff">Gemini</text>
<text transform="translate(36,118) rotate(15)" font-size="24" font-weight="bold" fill="#fff">S.</text>
<path d="M176 122l11-13 12 16" fill="none" stroke="#fff" stroke-width="3"/>
<g transform="translate(89,66) rotate(12)"><rect x="-11" y="-12" width="22" height="24" fill="none" stroke="#5a38d0" stroke-width="2"/><text x="-8" y="5" font-size="13" font-weight="bold" fill="#5a38d0">Ai</text></g>
<path d="M100 78l18 14-9 3-6 11z" fill="#4be0c0"/>
</svg></div>
<div class="a lb" style="left:861px;top:644px">AI Model Lab</div>

<!-- 10 Video Editor -->
<div class="a t" style="left:362px;top:734px;height:123px"><svg width="223" height="124" viewBox="0 0 223 124">
<defs><linearGradient id="c10" x1="0" y1="0" x2="0" y2="1"><stop offset="0" stop-color="#4080ba"/><stop offset=".65" stop-color="#a8c4d8"/></linearGradient></defs>
<rect width="223" height="124" fill="url(#c10)"/>
<path d="M0 124V74c40-10 80-24 112-30 40 6 70 20 111 36v44z" fill="#b2a690"/><path d="M0 124l130-58 93 22v36z" fill="#c8b8a0"/><rect x="120" y="80" width="103" height="44" fill="#8a8070" opacity=".4"/>
<text x="10" y="28" font-size="23" font-weight="bold" stroke="#fff" stroke-width=".8" fill="#fff" textLength="95" lengthAdjust="spacingAndGlyphs">MOTION</text>
<text x="10" y="54" font-size="24" font-weight="bold" fill="none" stroke="#fff" stroke-width=".7" textLength="96" lengthAdjust="spacingAndGlyphs">TRENDY</text>
<text x="10" y="79" font-size="23" font-weight="bold" stroke="#fff" stroke-width=".8" fill="#fff" textLength="98" lengthAdjust="spacingAndGlyphs">STYLISH</text>
<path d="M146 6c6 0 10 6 8 14l-6 0z" fill="#c02a7a"/><circle cx="141" cy="13" r="5.500" fill="#e2b090"/><path d="M135 10h12v-3h-12z" fill="#f0e8e0"/>
<path d="M132 20l14 2 4 16-16 6-6-6z" fill="#e07880"/>
<path d="M132 44l-8 14 6 12M146 42l6 14-4 12M150 28l14 14M130 28l-8 16" fill="none" stroke="#d8a080" stroke-width="3.500"/>
<path d="M122 72l30 4" stroke="#222" stroke-width="3"/>
<circle cx="202" cy="68" r="14.500" fill="#3fe0b8"/><use href="#film" x="195" y="61" width="14" height="14" color="#111"/>
<rect x="124" y="76" width="72" height="14" fill="#ea5a30"/><text x="129" y="87" font-size="10" fill="#fff">T</text><path d="M140 80h12M140 83h12M140 86h12" stroke="#fff" stroke-width="1.200"/>
<rect x="55" y="91" width="79" height="13" fill="#a8a08a" stroke="#eee"/><rect x="136" y="91" width="80" height="13" fill="#6aa8c8" stroke="#eee"/>
<path d="M172 72v52" stroke="#3fe0b8" stroke-width="1.500"/>
<rect x="89" y="105" width="116" height="13" rx="1" fill="#7a3ce8"/><path d="M100 111.500h2M106 109v5M110 107v9M114 109v5M118 106v11M122 109v5M126 108v7M130 106v11M134 109v5M138 107v9M142 109v5M146 106v11M150 108v7M154 109v5M158 106v11M162 109v5M166 107v9M170 109v5M174 106v11M178 109v5M182 107v9M186 109v5M190 107v9M194 109v5" stroke="#e8d8ff" stroke-width="1.200"/>
</svg></div>
<div class="a lb" style="left:362px;top:864px">Video Editor</div>

<!-- 11 Video Trimmer -->
<div class="a t" style="left:612px;top:734px;height:123px"><svg width="223" height="124" viewBox="0 0 223 124">
<rect width="223" height="124" fill="#d99bf2"/>
<path d="M88 58c-6-28 2-52 22-52 20 0 28 16 30 38l8 48H88z" fill="#8a5a2e"/>
<ellipse cx="106" cy="40" rx="15" ry="20" fill="#f0c4a4"/><path d="M99 47c4 4 10 4 14 0-1 7-13 7-14 0z" fill="#fff"/>
<path d="M92 28c3-12 22-16 32-6 3 4 2 10 3 16-5-9-16-13-35-10z" fill="#9a6a38"/>
<ellipse cx="125" cy="26" rx="6.500" ry="11" fill="#f4f4f8"/>
<path d="M86 124l8-44c8-6 30-6 38 0l12-4 10 48z" fill="#e8e0e8"/><path d="M132 78l20-4 8 50h-24z" fill="#6a90b8"/>
<path d="M170 66c4-8 2-20 4-32 0-6 3-6 3-1l1-10h3l1 9 3-8 3 1-2 10 3-5 2 2-6 24c-2 6-4 12-8 16z" fill="#f0b898"/>
<path d="M36 92l2-20c0-6 1-10 4-14l4-2 4 8-2 8 6 20z" fill="#eeb898"/>
<rect x="8" y="94" width="207" height="21" fill="#8a5ea8"/>
<g fill="#3a2a38"><rect x="14" y="96" width="12" height="18"/><rect x="36" y="96" width="12" height="18"/><rect x="186" y="96" width="12" height="18"/></g>
<rect x="54" y="94" width="123" height="22" fill="#c48ae6" stroke="#4be0c0" stroke-width="2.500"/>
<g fill="#7a5030"><rect x="62" y="101" width="12" height="13"/><rect x="87" y="101" width="12" height="13"/><rect x="112" y="101" width="12" height="13"/><rect x="137" y="101" width="12" height="13"/></g>
<g fill="#f0c8a8"><circle cx="68" cy="100" r="3.500"/><circle cx="93" cy="100" r="3.500"/><circle cx="118" cy="100" r="3.500"/><circle cx="143" cy="100" r="3.500"/></g>
<circle cx="32" cy="84" r="14" fill="#4be0c0"/><use href="#film" x="25" y="77" width="14" height="14" color="#111"/>
</svg></div>
<div class="a lb" style="left:612px;top:864px">Video Trimmer</div>

<!-- 12 Video Merger -->
<div class="a t" style="left:861px;top:734px;height:123px"><svg width="224" height="124" viewBox="0 0 224 124">
<defs><linearGradient id="c12" x1="0" y1="0" x2="0" y2="1"><stop offset="0" stop-color="#c0b29a"/><stop offset=".45" stop-color="#e6dfce"/><stop offset="1" stop-color="#d0c4b0"/></linearGradient><linearGradient id="bt" x1="0" y1="0" x2="0" y2="1"><stop offset="0" stop-color="#7a4a18"/><stop offset="1" stop-color="#d89838"/></linearGradient></defs>
<rect width="224" height="124" fill="url(#c12)"/>
<rect x="0" y="0" width="40" height="40" fill="#8a8878" filter="url(#b6)"/><rect x="195" y="0" width="29" height="60" fill="#a89c80" filter="url(#b6)"/>
<path d="M8 48l4-30M16 52l6-38M24 55l8-38M32 60l14-34M42 64l18-28M50 66l20-20M0 54l20 6M0 66l40 2M6 72l40-2" stroke="#33501e" stroke-width="4.500" fill="none"/>
<ellipse cx="140" cy="72" rx="50" ry="8" fill="#b4a890" filter="url(#b3)"/>
<rect x="87" y="31" width="38" height="43" rx="3" fill="url(#bt)"/><rect x="97" y="16" width="18" height="15" fill="#e0d0b0"/><rect x="100" y="8" width="12" height="9" fill="#9a9a9c"/>
<path d="M54 92c4-14 10-24 18-28 8 4 12 16 12 28z" fill="#e8c898"/><path d="M60 88c6-10 10-14 14-16M66 90c6-8 10-12 14-12" stroke="#7a4a22" stroke-width="2"/>
<path d="M126 66c6-10 14-14 24-8 4 10 2 20-6 26l-18-4z" fill="#d8b898"/><path d="M120 92c10-10 24-8 30 2l-14 4z" fill="#e8dcc8"/>
<rect x="6" y="94" width="104" height="23" rx="2" fill="#fff"/><rect x="12" y="96" width="92" height="19" fill="#d8c8a8"/>
<g fill="#a06a20"><rect x="20" y="99" width="9" height="12"/><rect x="52" y="99" width="9" height="12"/><rect x="84" y="99" width="9" height="12"/></g>
<rect x="113" y="94" width="106" height="23" rx="2" fill="#fff"/><rect x="119" y="96" width="94" height="19" fill="#2a8aa0"/>
<g fill="#a86a20"><rect x="130" y="100" width="9" height="12"/><rect x="162" y="100" width="9" height="12"/><rect x="192" y="100" width="9" height="12"/></g>
<circle cx="111" cy="94" r="14" fill="#4be0c0"/><rect x="104" y="87" width="14" height="14" fill="none" stroke="#111" stroke-width="1.500"/><path d="M107 87v14M115 87v14" stroke="#111"/>
</svg></div>
<div class="a lb" style="left:861px;top:864px">Video Merger</div>

<!-- annotations -->
<div class="a" style="left:1094px;top:325px;width:255px;height:169px;border:4px solid #e41f2a"></div>
<svg class="a" style="left:1190px;top:510px" width="75" height="105" viewBox="1190 510 75 105"><path d="M1227.700 519L1199.300 562.300H1214.700L1213.300 603.700H1241.700L1240 562.300H1255.300Z" fill="none" stroke="#e8202c" stroke-width="4" stroke-linejoin="round"/></svg>
</body></html>
